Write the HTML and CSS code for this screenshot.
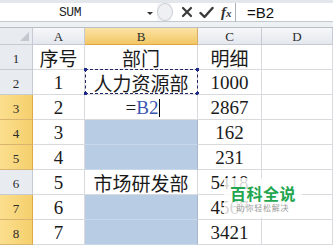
FILE: index.html
```html
<!DOCTYPE html>
<html>
<head>
<meta charset="utf-8">
<link rel="stylesheet" href="styles.css">
</head>
<body>
<div class="fbar">
  <div class="namebox"><span class="nb-text">SUM</span><span class="nb-arrow"></span></div>
  <div class="grip"></div>
  <div class="fbtns">
    <svg class="ic" width="12" height="12" viewBox="0 0 12 12"><path d="M2 2 L10 10 M10 2 L2 10" stroke="#3a3a3a" stroke-width="2.2" stroke-linecap="round"/></svg>
    <svg class="ic" width="15" height="13" viewBox="0 0 15 13"><path d="M1.5 7 L5.5 11 L13.5 2" fill="none" stroke="#3a3a3a" stroke-width="2.4" stroke-linecap="round" stroke-linejoin="round"/></svg>
    <span class="fx">f<span class="fx-x">x</span></span>
  </div>
  <div class="finput">=B2</div>
</div>
<div class="sheet">
  <div class="ch corner"><span class="tri"></span></div>
  <div class="ch">A</div>
  <div class="ch sel">B</div>
  <div class="ch">C</div>
  <div class="ch">D</div>

  <div class="rh">1</div>
  <div class="c">序号</div>
  <div class="c">部门</div>
  <div class="c">明细</div>
  <div class="c"></div>

  <div class="rh">2</div>
  <div class="c">1</div>
  <div class="c ref">人力资源部<span class="ants"><i class="h tl"></i><i class="h tr"></i><i class="h bl"></i><i class="h br"></i></span></div>
  <div class="c">1000</div>
  <div class="c"></div>

  <div class="rh sel">3</div>
  <div class="c">2</div>
  <div class="c edit"><span class="eq">=</span><span class="rf">B2</span><span class="caret"></span></div>
  <div class="c">2867</div>
  <div class="c"></div>

  <div class="rh sel">4</div>
  <div class="c">3</div>
  <div class="c hl"></div>
  <div class="c">162</div>
  <div class="c"></div>

  <div class="rh sel">5</div>
  <div class="c">4</div>
  <div class="c hl"></div>
  <div class="c">231</div>
  <div class="c"></div>

  <div class="rh">6</div>
  <div class="c">5</div>
  <div class="c">市场研发部</div>
  <div class="c">5418</div>
  <div class="c"></div>

  <div class="rh sel">7</div>
  <div class="c">6</div>
  <div class="c hl"></div>
  <div class="c">4567</div>
  <div class="c"></div>

  <div class="rh sel">8</div>
  <div class="c">7</div>
  <div class="c hl"></div>
  <div class="c">3421</div>
  <div class="c"></div>
</div>
<div class="wm">
  <div class="wm-title">百科全说</div>
  <div class="wm-sub">助你轻松解决</div>
</div>
</body>
</html>
```
FILE: styles.css
```css
html, body {
  margin: 0;
  padding: 0;
  background: #ffffff;
  overflow: hidden;
  width: 333px;
  height: 247px;
  position: relative;
}
.fbar {
  display: flex;
  align-items: stretch;
  height: 19px;
  padding-top: 3px;
  padding-bottom: 5px;
  background: #e3e7ec;
  border-bottom: 1px solid #b9bec6;
  box-shadow: inset 0 -6px 0 #eef1f4;
}
.namebox {
  width: 157px;
  background: #ffffff;
  border-bottom: 1px solid #c4c9d0;
  display: flex;
  align-items: center;
  position: relative;
}
.nb-text {
  font-family: "Liberation Mono", monospace;
  font-size: 13px;
  color: #222;
  width: 140px;
  text-align: center;
  letter-spacing: -0.5px;
}
.nb-arrow {
  width: 0;
  height: 0;
  border-left: 3px solid transparent;
  border-right: 3px solid transparent;
  border-top: 3px solid #333;
  margin-left: 7px;
  margin-top: 2px;
}
.grip {
  width: 14px;
  background: #f5f6f8;
  position: relative;
  border-bottom: 1px solid #c4c9d0;
}
.grip::before {
  content: "";
  position: absolute;
  left: 0;
  top: 0;
  width: 16px;
  height: 18px;
  border-radius: 50%;
  border: 1px solid #c8ccd3;
  background: #eef0f3;
  box-sizing: border-box;
}
.fbtns {
  width: 65px;
  background: #ffffff;
  border-bottom: 1px solid #c4c9d0;
  border-right: 1px solid #aab0b8;
  display: flex;
  align-items: center;
  gap: 6px;
  padding-left: 10px;
  box-sizing: border-box;
}
.ic { display: block; }
.fx {
  font-family: "Liberation Serif", serif;
  font-style: italic;
  font-weight: bold;
  font-size: 15px;
  color: #333;
  margin-left: 1px;
}
.fx-x { font-size: 11px; }
.finput {
  flex: 1;
  background: #ffffff;
  border-bottom: 1px solid #c4c9d0;
  font-family: "Liberation Sans", sans-serif;
  font-size: 15px;
  color: #111;
  padding-left: 11px;
  line-height: 19px;
}
.sheet {
  display: grid;
  grid-template-columns: 33px 52px 113px 64px 1fr;
  grid-template-rows: 17px repeat(8, 25px);
}
.ch, .rh {
  box-sizing: border-box;
  border-right: 1px solid #c5cad3;
  border-bottom: 1px solid #c5cad3;
  background: linear-gradient(#f6f7f9, #e4e8ee);
  font-family: "Liberation Serif", serif;
  font-size: 13px;
  color: #2b2b2b;
  display: flex;
  justify-content: center;
  align-items: center;
}
.ch { padding-top: 1px; }
.rh {
  background: #e8ebf0;
  align-items: flex-end;
  padding-bottom: 2px;
}
.ch.sel {
  background: linear-gradient(#fbe3a6, #f2c764);
  border-bottom-color: #e0a844;
  border-right-color: #d6ae6a;
}
.rh.sel {
  background: linear-gradient(90deg, #fbdf8f, #f5cf6c);
  border-right-color: #e0a844;
  border-bottom-color: #d9b470;
}
.corner {
  position: relative;
  background: #e8ebf0;
}
.tri {
  position: absolute;
  right: 3px;
  bottom: 3px;
  width: 0;
  height: 0;
  border-left: 9px solid transparent;
  border-bottom: 9px solid #c3c8cf;
}
.c {
  box-sizing: border-box;
  border-right: 1px solid #d8dadd;
  border-bottom: 1px solid #d8dadd;
  font-family: "Liberation Serif", "Noto Sans CJK SC", serif;
  font-size: 19px;
  color: #1a1a1a;
  display: flex;
  justify-content: center;
  align-items: center;
  padding-top: 1px;
  white-space: nowrap;
  position: relative;
}
.hl {
  background: #b8cce4;
  border-bottom-color: #c9d7ea;
  border-right-color: #a8b8cc;
}
.ants {
  position: absolute;
  left: 0;
  top: -1px;
  right: -1px;
  bottom: 0;
  border: 1px dashed #262660;
}
.h {
  position: absolute;
  width: 3px;
  height: 3px;
  background: #1c2a8c;
}
.tl { left: -2px; top: -2px; }
.tr { right: -2px; top: -2px; }
.bl { left: -2px; bottom: -2px; }
.br { right: -2px; bottom: -2px; }
.edit { padding-left: 4px; }
.eq { color: #1a1a1a; }
.rf { color: #3a57b0; }
.caret {
  display: inline-block;
  width: 1px;
  height: 18px;
  background: #000;
  margin-left: 1px;
}
.wm {
  position: absolute;
  left: 224px;
  top: 178px;
  width: 78px;
  height: 40px;
  background: rgba(255, 255, 255, 0.82);
  display: flex;
  flex-direction: column;
  align-items: center;
  justify-content: center;
}
.wm-title {
  font-family: "Noto Sans CJK SC", sans-serif;
  font-weight: bold;
  font-size: 16px;
  line-height: 18px;
  color: #22a64f;
  letter-spacing: 0.5px;
  white-space: nowrap;
}
.wm-sub {
  font-family: "Noto Sans CJK SC", sans-serif;
  font-size: 8px;
  line-height: 11px;
  color: #9a9a9a;
  letter-spacing: 0.8px;
  white-space: nowrap;
}
```
